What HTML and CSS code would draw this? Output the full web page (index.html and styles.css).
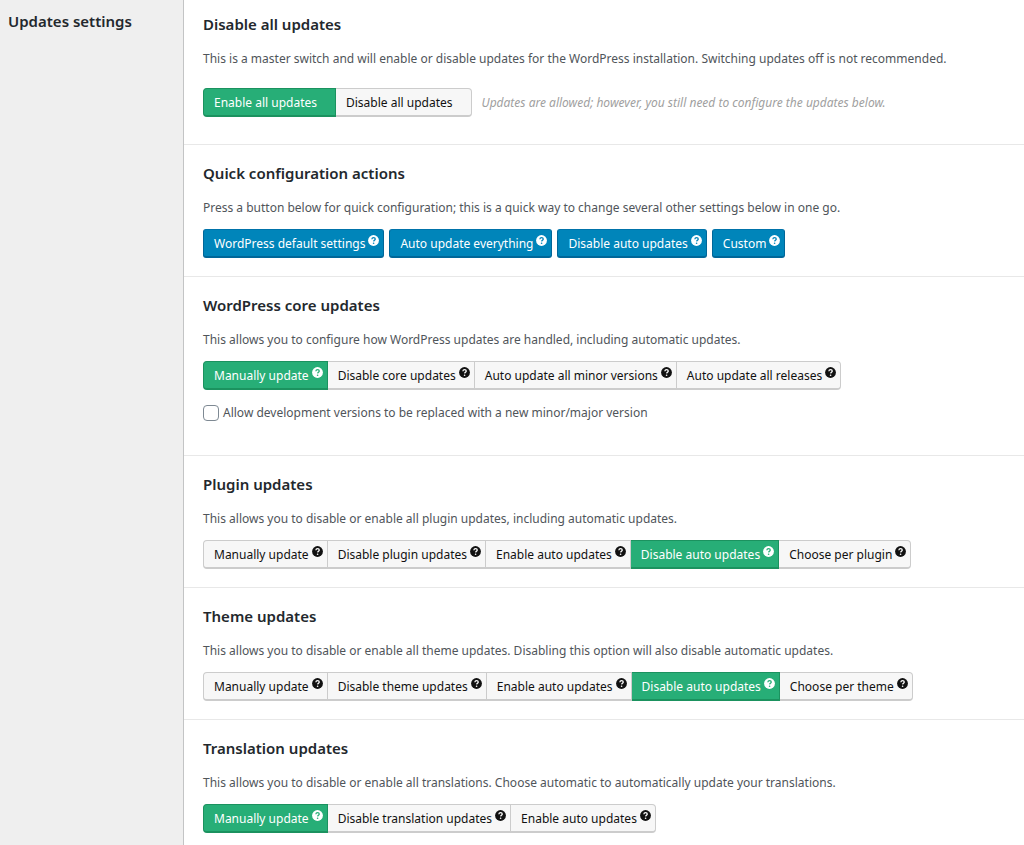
FILE: index.html
```html
<!DOCTYPE html>
<html lang="en">
<head>
  <meta charset="UTF-8">
  <meta name="viewport" content="width=device-width, initial-scale=1.0">
  <title>Updates settings</title>
  <link rel="stylesheet" href="styles.css">
</head>
<body>
  <!-- Help icon, reused by the buttons -->
  <svg class="sprite" aria-hidden="true">
    <symbol id="help" viewBox="0 0 12 12">
      <circle cx="6" cy="6" r="5.9" fill="currentColor"/>
      <path class="mark" d="M4.2 4.6C4.3 3.4 5.1 2.9 6.1 2.9s1.8.6 1.8 1.5c0 1.3-1.7 1.2-1.8 2.6" fill="none" stroke-width="1.4"/>
      <circle class="dot" cx="6.1" cy="9" r=".9"/>
    </symbol>
  </svg>

  <div class="settings">
    <aside class="sidebar">
      <h2>Updates settings</h2>
    </aside>

    <main class="content">
      <section class="section section-master">
        <h3>Disable all updates</h3>
        <p>This is a master switch and will enable or disable updates for the WordPress installation. Switching updates off is not recommended.</p>
        <div class="row">
          <div class="button-group plain">
            <button type="button" class="button active">Enable all updates</button>
            <button type="button" class="button">Disable all updates</button>
          </div>
          <em class="note">Updates are allowed; however, you still need to configure the updates below.</em>
        </div>
      </section>

      <section class="section">
        <h3>Quick configuration actions</h3>
        <p>Press a button below for quick configuration; this is a quick way to change several other settings below in one go.</p>
        <div class="actions">
          <button type="button" class="button primary">WordPress default settings<svg class="help"><use href="#help"/></svg></button>
          <button type="button" class="button primary">Auto update everything<svg class="help"><use href="#help"/></svg></button>
          <button type="button" class="button primary">Disable auto updates<svg class="help"><use href="#help"/></svg></button>
          <button type="button" class="button primary">Custom<svg class="help"><use href="#help"/></svg></button>
        </div>
      </section>

      <section class="section section-core">
        <h3>WordPress core updates</h3>
        <p>This allows you to configure how WordPress updates are handled, including automatic updates.</p>
        <div class="button-group">
          <button type="button" class="button active">Manually update<svg class="help"><use href="#help"/></svg></button>
          <button type="button" class="button">Disable core updates<svg class="help"><use href="#help"/></svg></button>
          <button type="button" class="button">Auto update all minor versions<svg class="help"><use href="#help"/></svg></button>
          <button type="button" class="button">Auto update all releases<svg class="help"><use href="#help"/></svg></button>
        </div>
        <div class="check">
          <input type="checkbox" id="allow-dev">
          <label for="allow-dev">Allow development versions to be replaced with a new minor/major version</label>
        </div>
      </section>

      <section class="section">
        <h3>Plugin updates</h3>
        <p>This allows you to disable or enable all plugin updates, including automatic updates.</p>
        <div class="button-group">
          <button type="button" class="button">Manually update<svg class="help"><use href="#help"/></svg></button>
          <button type="button" class="button">Disable plugin updates<svg class="help"><use href="#help"/></svg></button>
          <button type="button" class="button">Enable auto updates<svg class="help"><use href="#help"/></svg></button>
          <button type="button" class="button active">Disable auto updates<svg class="help"><use href="#help"/></svg></button>
          <button type="button" class="button">Choose per plugin<svg class="help"><use href="#help"/></svg></button>
        </div>
      </section>

      <section class="section">
        <h3>Theme updates</h3>
        <p>This allows you to disable or enable all theme updates. Disabling this option will also disable automatic updates.</p>
        <div class="button-group">
          <button type="button" class="button">Manually update<svg class="help"><use href="#help"/></svg></button>
          <button type="button" class="button">Disable theme updates<svg class="help"><use href="#help"/></svg></button>
          <button type="button" class="button">Enable auto updates<svg class="help"><use href="#help"/></svg></button>
          <button type="button" class="button active">Disable auto updates<svg class="help"><use href="#help"/></svg></button>
          <button type="button" class="button">Choose per theme<svg class="help"><use href="#help"/></svg></button>
        </div>
      </section>

      <section class="section section-last">
        <h3>Translation updates</h3>
        <p>This allows you to disable or enable all translations. Choose automatic to automatically update your translations.</p>
        <div class="button-group">
          <button type="button" class="button active">Manually update<svg class="help"><use href="#help"/></svg></button>
          <button type="button" class="button">Disable translation updates<svg class="help"><use href="#help"/></svg></button>
          <button type="button" class="button">Enable auto updates<svg class="help"><use href="#help"/></svg></button>
        </div>
      </section>
    </main>
  </div>
</body>
</html>
```
FILE: styles.css
```css
* {
  box-sizing: border-box;
}

body {
  margin: 0;
  font-family: "Noto Sans", "Open Sans", sans-serif;
  font-size: 12px;
  line-height: 20px;
  color: #50555a;
  background: #fff;
}

.sprite {
  position: absolute;
  width: 0;
  height: 0;
}

.settings {
  display: flex;
  min-height: 100vh;
}

.sidebar {
  flex: 0 0 184px;
  padding: 9px 8px;
  background: #efefef;
  border-right: 1px solid #c3c4c5;
}

h2,
h3 {
  margin: 0;
  font-size: 15px;
  font-weight: 600;
  line-height: 24px;
  color: #23282d;
}

.content {
  flex: 1;
  min-width: 0;
}

.section {
  padding: 16px 19px 18px;
  border-bottom: 1px solid #e8e8e8;
}

.section p {
  margin: 13px 0 11px;
}

.section-master {
  padding: 12px 19px 27px;
}

.section-master p {
  margin-bottom: 19px;
}

.section-core {
  padding-bottom: 32px;
}

.section-last {
  padding-bottom: 11px;
  border-bottom: 0;
}

.row {
  display: flex;
  align-items: center;
  gap: 10px;
}

.note {
  color: #a0a0a0;
}

/* Buttons */
.button {
  height: 29px;
  padding: 2px 9px 0 10px;
  font: inherit;
  color: #111;
  white-space: nowrap;
  background: #f7f7f7;
  border: 1px solid #ccc;
  border-bottom-width: 2px;
  cursor: pointer;
}

.button-group {
  display: flex;
}

.button-group .button {
  padding-right: 4px;
  border-left-width: 0;
}

.button-group .button:first-child {
  border-left-width: 1px;
  border-radius: 4px 0 0 4px;
}

.button-group .button:last-child {
  border-radius: 0 4px 4px 0;
}

.button-group.plain .button {
  padding-right: 18px;
}

.button-group .button.active {
  color: #fff;
  background: #27ae77;
  border-color: #1b925f;
}

.actions {
  display: flex;
  gap: 5px;
}

.button.primary {
  padding-right: 4px;
  color: #fff;
  background: #0085ba;
  border-color: #0073aa #006799 #006799;
  border-radius: 3px;
}

/* Help icon */
.help {
  --mark: #fff;
  width: 11px;
  height: 11px;
  margin-left: 3px;
  vertical-align: 2px;
}

.active .help {
  --mark: #27ae77;
}

.primary .help {
  --mark: #0085ba;
}

.mark {
  stroke: var(--mark);
}

.dot {
  fill: var(--mark);
}

/* Checkbox */
.check {
  display: flex;
  align-items: center;
  gap: 4px;
  margin-top: 13px;
}

.check input {
  appearance: none;
  width: 16px;
  height: 16px;
  margin: 0;
  background: #fff;
  border: 1px solid #7e8993;
  border-radius: 4px;
}

.check input:checked {
  background: #0085ba;
}
```
